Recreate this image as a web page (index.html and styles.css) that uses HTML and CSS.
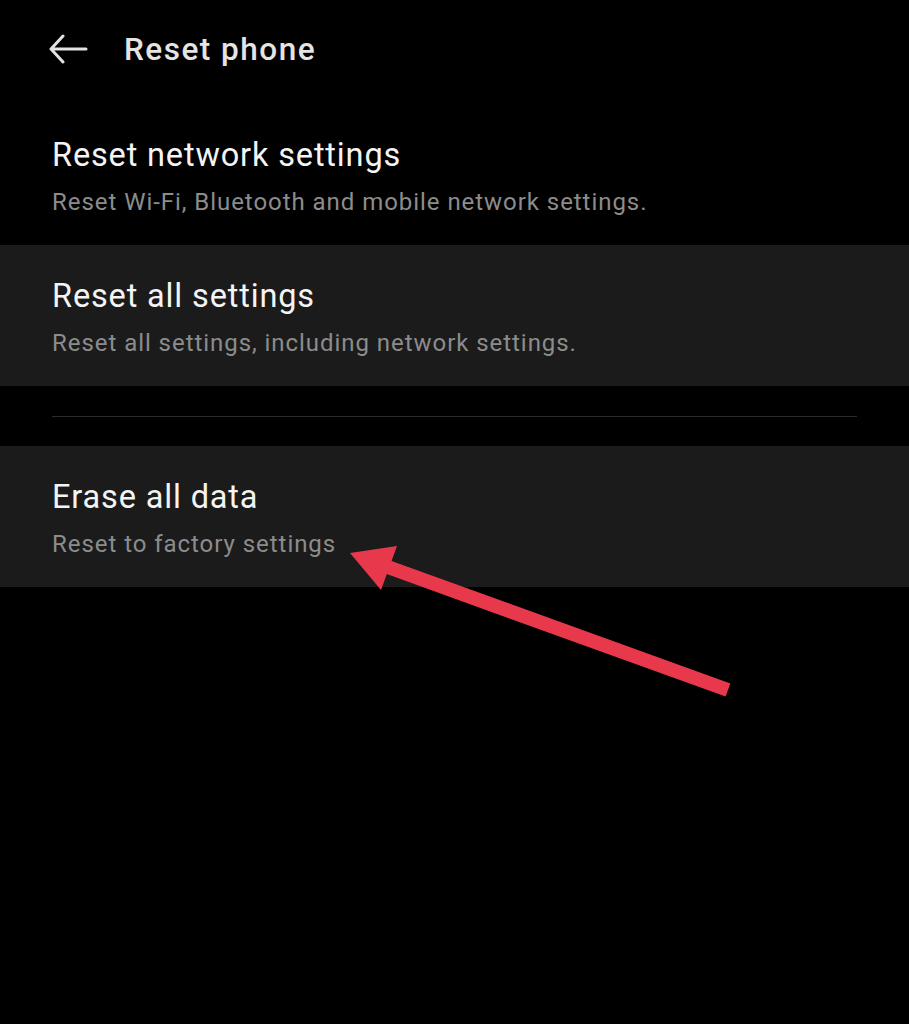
FILE: index.html
```html
<!DOCTYPE html>
<html>
<head>
<meta charset="utf-8">
<link rel="stylesheet" href="styles.css">
</head>
<body>
<div class="screen">
  <header class="topbar">
    <svg class="back" width="40" height="30" viewBox="0 0 40 30">
      <path d="M15 2 L3 15 L15 28 M3 15 H38" fill="none" stroke="#e2e2e2" stroke-width="3" stroke-linecap="round" stroke-linejoin="round"/>
    </svg>
    <h1 class="title">Reset phone</h1>
  </header>
  <div class="item">
    <div class="item-title">Reset network settings</div>
    <div class="item-sub">Reset Wi-Fi, Bluetooth and mobile network settings.</div>
  </div>
  <div class="item shaded">
    <div class="item-title">Reset all settings</div>
    <div class="item-sub">Reset all settings, including network settings.</div>
  </div>
  <div class="sep"><div class="sep-line"></div></div>
  <div class="item shaded">
    <div class="item-title">Erase all data</div>
    <div class="item-sub">Reset to factory settings</div>
  </div>
  <svg class="pointer" width="909" height="1024" viewBox="0 0 909 1024">
    <line x1="728" y1="690" x2="385" y2="566" stroke="#e8394c" stroke-width="14"/>
    <polygon points="350,553 397,546 381,590" fill="#e8394c"/>
  </svg>
</div>
</body>
</html>
```

FILE: styles.css
```css
html, body {
  margin: 0;
  padding: 0;
  background: #000;
}
.screen {
  position: relative;
  width: 909px;
  height: 1024px;
  background: #000;
  font-family: Roboto, "Noto Sans", sans-serif;
  overflow: hidden;
}
.topbar {
  height: 104px;
  display: flex;
  align-items: center;
  padding-left: 48px;
  box-sizing: border-box;
  padding-bottom: 6px;
}
.back {
  display: block;
  margin-right: 36px;
}
.title {
  margin: 0;
  font-size: 31.5px;
  font-weight: 500;
  color: #e4e4e4;
  letter-spacing: 1.5px;
}
.item {
  height: 141px;
  box-sizing: border-box;
  padding: 32px 52px 0;
}
.shaded {
  background: #1b1b1b;
}
.item-title {
  font-size: 32.5px;
  color: #f4f4f4;
  line-height: 38px;
  letter-spacing: 0.85px;
}
.item-sub {
  margin-top: 14px;
  font-size: 24px;
  color: #8c8c8c;
  line-height: 28px;
  letter-spacing: 0.95px;
}
.sep {
  height: 60px;
  display: flex;
  align-items: center;
  padding: 0 52px;
}
.sep-line {
  flex: 1;
  height: 1px;
  background: #2b2b2b;
}
.pointer {
  position: absolute;
  left: 0;
  top: 0;
  pointer-events: none;
}
```
